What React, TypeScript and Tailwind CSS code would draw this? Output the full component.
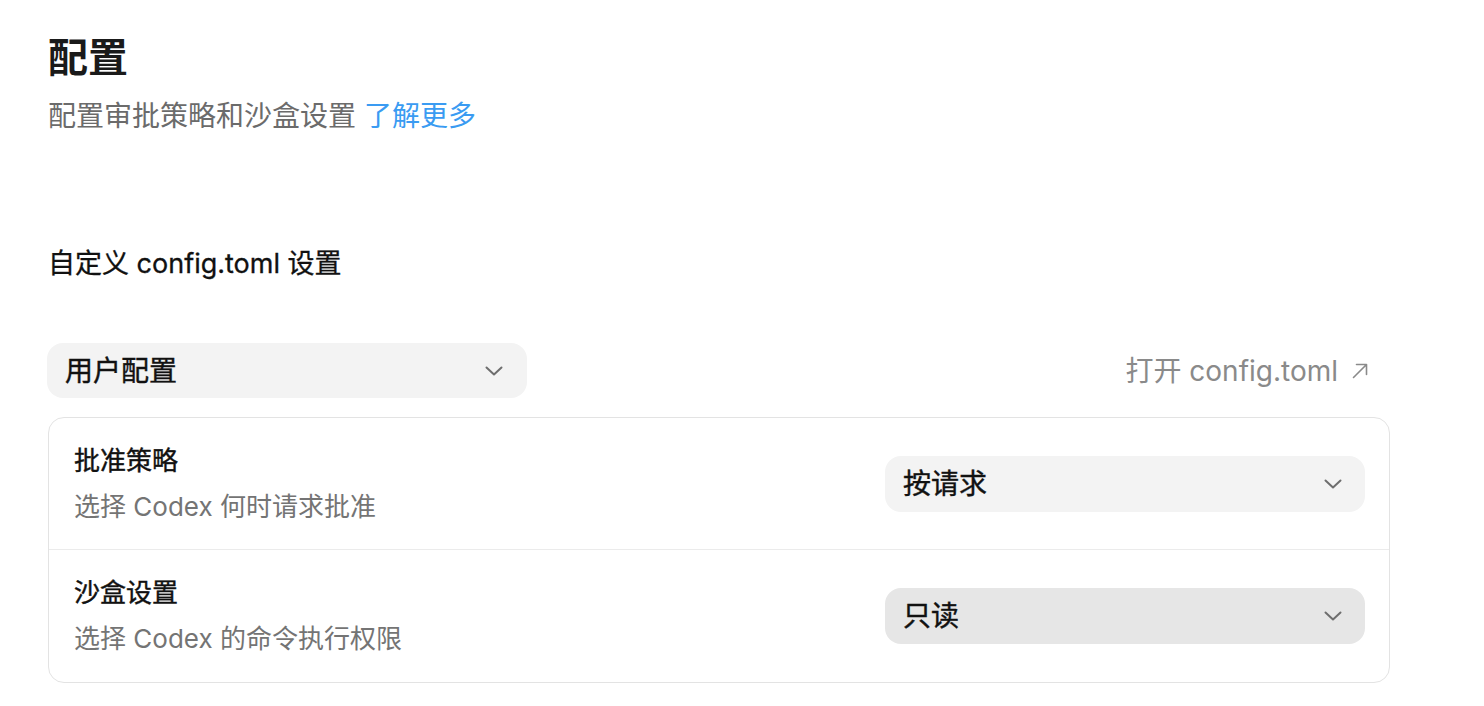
import { FC } from "react";

const font = {
  fontFamily: '"Inter", "Noto Sans CJK SC", "Noto Sans", sans-serif',
};

const Chevron: FC = () => (
  <svg width="18" height="10" viewBox="0 0 18 10" fill="none" className="shrink-0">
    <path d="M1.5 1.5 9 8.5l7.5-7" stroke="#6e6e6e" strokeWidth="2" strokeLinecap="round" strokeLinejoin="round" />
  </svg>
);

const Select: FC<{ label: string; active?: boolean }> = ({ label, active }) => (
  <button
    className={
      active
        ? "flex h-[56px] w-[480px] items-center justify-between rounded-[16px] bg-[#e6e6e6] pl-[18px] pr-[23px] text-left"
        : "flex h-[56px] w-[480px] items-center justify-between rounded-[16px] bg-[#f3f3f3] pl-[18px] pr-[23px] text-left"
    }
  >
    <span className="text-[28px] leading-[36px] text-[#111111] [-webkit-text-stroke:0.4px_#111111]">{label}</span>
    <Chevron />
  </button>
);

const Row: FC<{ title: string; desc: string; value: string; active?: boolean; last?: boolean }> = ({
  title,
  desc,
  value,
  active,
  last,
}) => (
  <div
    className={
      last
        ? "flex h-[132px] items-center justify-between pl-[25px] pr-[24px]"
        : "flex h-[132px] items-center justify-between border-b border-[#ebebeb] pl-[25px] pr-[24px]"
    }
  >
    <div className="flex flex-col">
      <div className="text-[26px] leading-[36px] text-[#111111] [-webkit-text-stroke:0.4px_#111111]">{title}</div>
      <div className="mt-[10px] text-[26px] leading-[36px] text-[#747474]">{desc}</div>
    </div>
    <Select label={value} active={active} />
  </div>
);

export default function App() {
  return (
    <div className="min-h-screen bg-white" style={font}>
      <div className="ml-[48px] w-[1342px] pt-[34px]">
        <h1 className="text-[40px] font-semibold leading-[48px] text-[#1a1a1a]">配置</h1>
        <p className="mt-[16px] text-[28px] leading-[36px] text-[#6b6b6b]">
          配置审批策略和沙盒设置 <span className="text-[#3a9bf2]">了解更多</span>
        </p>

        <h2 className="mt-[112px] text-[27px] leading-[36px] text-[#111111] [-webkit-text-stroke:0.3px_#111111]">
          自定义 config.toml 设置
        </h2>

        <div className="mt-[61px] flex items-center justify-between">
          <button className="-ml-[1px] flex h-[55px] w-[480px] items-center justify-between rounded-[16px] bg-[#f3f3f3] pl-[18px] pr-[24px] text-left">
            <span className="text-[28px] leading-[36px] text-[#111111] [-webkit-text-stroke:0.4px_#111111]">用户配置</span>
            <Chevron />
          </button>
          <a className="mr-[22px] flex items-center gap-[14px] text-[28px] leading-[36px] text-[#8a8a8a]">
            打开 config.toml
            <svg width="16" height="16" viewBox="0 0 16 16" fill="none">
              <path d="M1.5 14.5 14 2M4.5 1.5H14.5V11.5" stroke="#8a8a8a" strokeWidth="1.6" strokeLinecap="round" strokeLinejoin="round" />
            </svg>
          </a>
        </div>

        <div className="mt-[19px] rounded-[16px] border border-[#e3e3e3]">
          <Row title="批准策略" desc="选择 Codex 何时请求批准" value="按请求" />
          <Row title="沙盒设置" desc="选择 Codex 的命令执行权限" value="只读" active last />
        </div>
      </div>
    </div>
  );
}
